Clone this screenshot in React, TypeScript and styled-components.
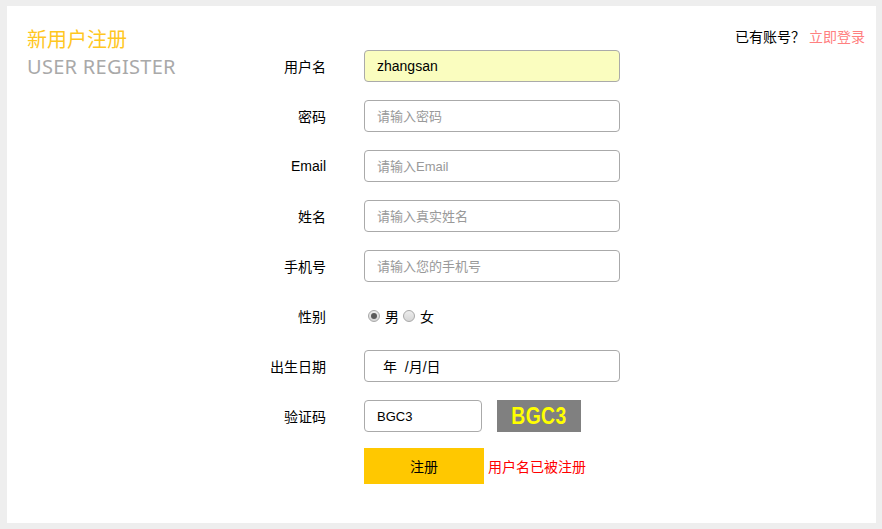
import React from "react";
import styled, { createGlobalStyle } from "styled-components";

const Global = createGlobalStyle`
  html, body { margin: 0; padding: 0; background: #eeeeee; }
  body { font-family: "Liberation Sans", "Noto Sans CJK SC", sans-serif; }
  #root { padding: 6px 6px 6px 7px; }
`;

const Card = styled.div`
  background: #fff;
  height: 517px;
  box-sizing: border-box;
  padding: 20px 11px 0 20px;
  display: grid;
  grid-template-columns: 219px auto 1fr auto;
  align-items: start;
`;

const TitleBlock = styled.div`
  font-family: "Noto Sans", "Noto Sans CJK SC", sans-serif;
  font-size: 20px;
  line-height: 27px;
`;

const TitleCn = styled.div`
  color: #ffc71f;
`;

const TitleEn = styled.div`
  color: #a9a9a9;
  letter-spacing: 0.3px;
`;

const Form = styled.form`
  margin-top: 15px;
  display: grid;
  grid-template-columns: 80px 256px;
  grid-auto-rows: 50px;
  column-gap: 38px;
  align-items: center;
`;

const Label = styled.label`
  text-align: right;
  font-size: 14px;
  color: #000;
`;

const Field = styled.input<{ $filled?: boolean; $width?: number }>`
  box-sizing: border-box;
  width: ${(p) => (p.$width ? `${p.$width}px` : "100%")};
  height: 32px;
  border: 1px solid #aaaaaa;
  border-radius: 4px;
  padding: 0 12px;
  font-family: "Liberation Sans", "Noto Sans CJK SC", sans-serif;
  font-size: ${(p) => (p.$filled ? "14px" : "13px")};
  color: #000;
  background: ${(p) => (p.$filled ? "#fafdbf" : "#fff")};
  outline: none;
  &::placeholder { color: #999; }
`;

const DateField = styled(Field)`
  padding-left: 18px;
  font-size: 14px;
  white-space: pre;
`;

const RadioGroup = styled.div`
  display: flex;
  align-items: center;
  font-size: 14px;
  color: #000;
`;

const Radio = styled.input`
  appearance: none;
  width: 12px;
  height: 12px;
  margin: 0 5px 0 4px;
  border-radius: 50%;
  border: 1px solid #a8a8a8;
  background: linear-gradient(#ededed, #d6d6d6);
  box-sizing: border-box;
  position: relative;
  &:checked::after {
    content: "";
    position: absolute;
    left: 2px;
    top: 2px;
    width: 6px;
    height: 6px;
    border-radius: 50%;
    background: #5a5a5a;
  }
`;

const CaptchaRow = styled.div`
  display: flex;
  align-items: center;
  gap: 15px;
`;

const Captcha = styled.div`
  width: 84px;
  height: 32px;
  background: #808080;
  display: flex;
  align-items: center;
  justify-content: center;
  color: #ffff00;
  font-family: "Liberation Sans Narrow", "Liberation Sans", sans-serif;
  font-weight: bold;
  font-size: 23px;
  letter-spacing: 0.5px;
`;

const CaptchaText = styled.span`
  display: inline-block;
  transform: scaleX(0.84);
`;

const SubmitRow = styled.div`
  display: flex;
  align-items: center;
  gap: 4px;
  white-space: nowrap;
`;

const Submit = styled.button`
  width: 120px;
  height: 36px;
  border: none;
  background: #ffc800;
  font-family: "Liberation Sans", "Noto Sans CJK SC", sans-serif;
  font-size: 14px;
  color: #000;
  cursor: pointer;
`;

const ErrorText = styled.span`
  color: #ff0000;
  font-size: 14px;
`;

const LoginHint = styled.div`
  grid-column: 4;
  font-size: 14px;
  color: #000;
  margin-top: 0;
`;

const LoginLink = styled.a`
  color: #ff8080;
  text-decoration: none;
`;

export default function App() {
  return (
    <>
      <Global />
      <Card>
        <TitleBlock>
          <TitleCn>新用户注册</TitleCn>
          <TitleEn>USER REGISTER</TitleEn>
        </TitleBlock>
        <Form onSubmit={(e) => e.preventDefault()}>
          <Label>用户名</Label>
          <Field $filled defaultValue="zhangsan" />
          <Label>密码</Label>
          <Field type="password" placeholder="请输入密码" />
          <Label>Email</Label>
          <Field placeholder="请输入Email" />
          <Label>姓名</Label>
          <Field placeholder="请输入真实姓名" />
          <Label>手机号</Label>
          <Field placeholder="请输入您的手机号" />
          <Label>性别</Label>
          <RadioGroup>
            <Radio type="radio" name="sex" defaultChecked />
            男
            <Radio type="radio" name="sex" />
            女
          </RadioGroup>
          <Label>出生日期</Label>
          <DateField readOnly defaultValue="年  /月/日" />
          <Label>验证码</Label>
          <CaptchaRow>
            <Field $width={118} defaultValue="BGC3" />
            <Captcha>
              <CaptchaText>BGC3</CaptchaText>
            </Captcha>
          </CaptchaRow>
          <span />
          <SubmitRow>
            <Submit type="submit">注册</Submit>
            <ErrorText>用户名已被注册</ErrorText>
          </SubmitRow>
        </Form>
        <LoginHint>
          已有账号？ <LoginLink href="#">立即登录</LoginLink>
        </LoginHint>
      </Card>
    </>
  );
}
